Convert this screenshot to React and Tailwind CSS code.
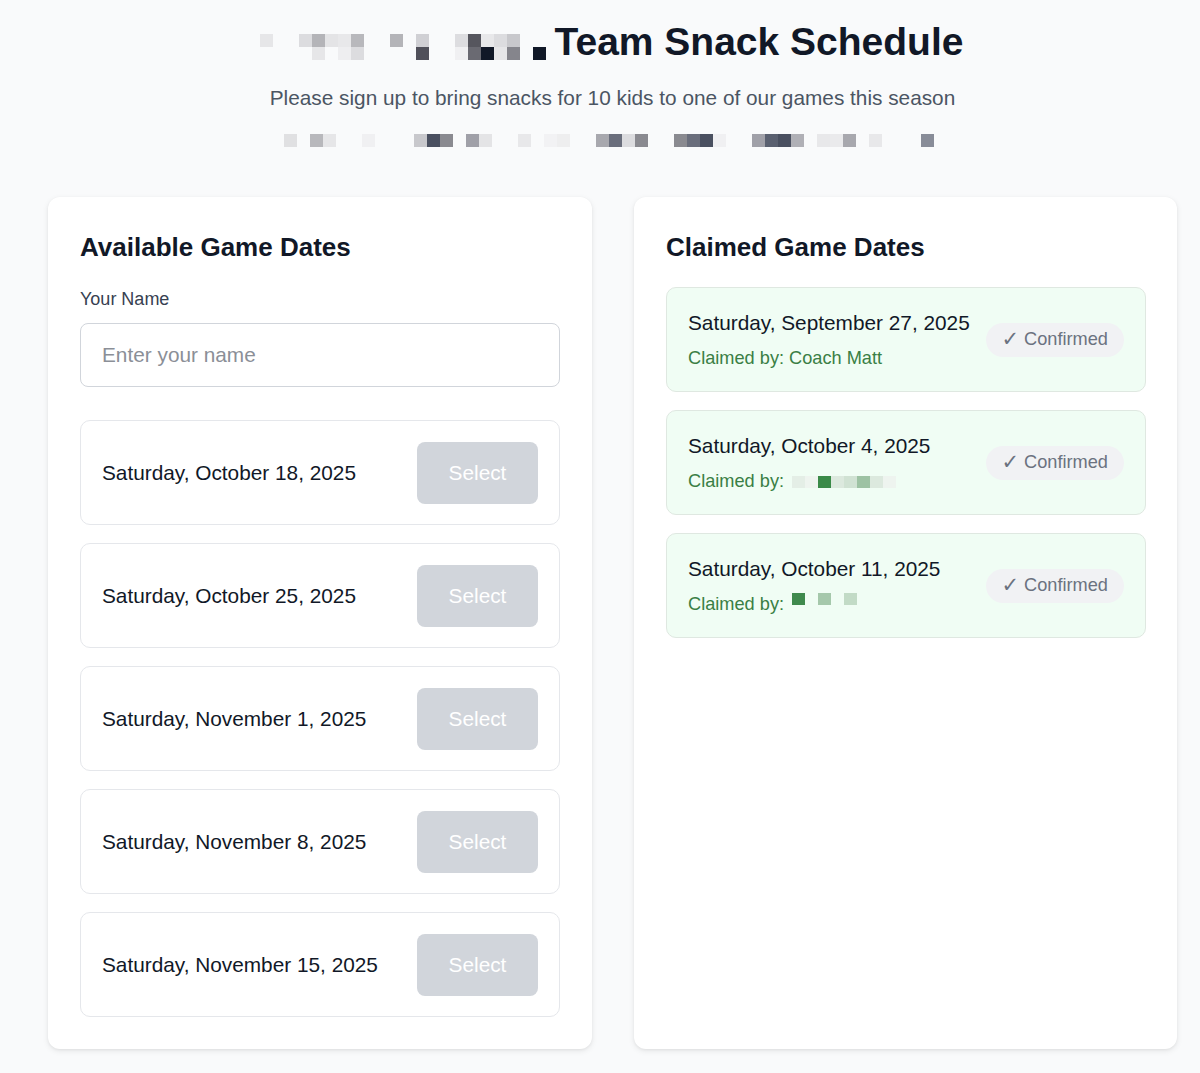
import React, { useState } from "react";

const font = { fontFamily: '"Liberation Sans", Arial, sans-serif' };

// redacted text rendered as mosaic cells
const titleRows = [
  ["#e6e6e8", null, null, "#dcdcdf", "#b4b4b8", "#e4e4e6", "#e8e8ea", "#b8b8bc", null, null, "#b4b4b8", null, "#d0d0d4", null, null, "#dddde0", "#56565e", "#e8e8ea", "#dcdcdf", "#c8c8cc", null, null],
  [null, null, null, null, "#e6e6e8", null, "#eeeef0", "#dcdcdf", null, null, null, null, "#50505a", null, null, "#f0f0f2", "#6a6a72", "#111827", "#e6e6e8", "#85858c", null, "#111827"],
];

const subRow = (() => {
  const row = Array(50).fill(null);
  const set = {
    0: "#e0e0e2", 2: "#b8b8bc", 3: "#e6e6e8", 6: "#f0f0f2", 10: "#c8c8cc", 11: "#4a5060", 12: "#8a8a90",
    14: "#a0a0a8", 15: "#e4e4e6", 18: "#e8e8ea", 20: "#f2f2f4", 21: "#eeeeef", 24: "#a8a8ae", 25: "#6a6e7c",
    26: "#dcdcdf", 27: "#8a8a90", 30: "#8a8a90", 31: "#6a6e7c", 32: "#4a5060", 33: "#f0f0f2", 36: "#a0a0a8",
    37: "#5a6070", 38: "#4a5060", 39: "#b0b0b6", 41: "#e8e8ea", 42: "#eaeaec", 43: "#a8a8ae", 45: "#e8e8ea", 49: "#888c98",
  };
  Object.entries(set).forEach(([k, v]) => (row[k] = v));
  return row;
})();

const Mosaic = ({ rows, cell = 13, h, className = "" }) => (
  <div className={"inline-flex flex-col " + className}>
    {rows.map((r, i) => (
      <div key={i} className="flex">
        {r.map((c, j) => (
          <span
            key={j}
            className="block shrink-0"
            style={{ width: cell, height: h || cell, background: c || "transparent" }}
          />
        ))}
      </div>
    ))}
  </div>
);

const available = [
  "Saturday, October 18, 2025",
  "Saturday, October 25, 2025",
  "Saturday, November 1, 2025",
  "Saturday, November 8, 2025",
  "Saturday, November 15, 2025",
];

const claimed = [
  { date: "Saturday, September 27, 2025", name: "Coach Matt" },
  {
    date: "Saturday, October 4, 2025",
    mosaic: [["#e4eee6", "#eef4ef", "#3a8a48", "#dce9de", "#d0e2d3", "#9dc2a3", "#dce9de", "#eef4ef"]],
    offset: "mt-[2px]",
  },
  {
    date: "Saturday, October 11, 2025",
    mosaic: [["#3f8a4d", null, "#a5c8ab", null, "#c2dbc6"]],
    offset: "-mt-[10px]",
  },
];

export default function App() {
  const [name, setName] = useState("");

  return (
    <div className="min-h-screen bg-[#f9fafb] pb-[24px]" style={font}>
      <div className="ml-[48px] w-[1129px]">
        <header className="pt-[18px] flex flex-col items-center">
          <h1 className="flex items-end h-[48px] text-[39px] leading-[48px] font-bold text-[#111827]">
            <Mosaic rows={titleRows} className="mb-[6px] mr-[9px] -ml-[2px]" />
            Team Snack Schedule
          </h1>
          <p className="mt-[17px] text-[20.8px] leading-[30px] text-[#4b5563]">
            Please sign up to bring snacks for 10 kids to one of our games this season
          </p>
          <Mosaic rows={[subRow]} className="mt-[21px] -ml-[8px]" />
        </header>

        <div className="mt-[50px] grid grid-cols-[544px_543px] gap-[42px]">
          {/* available dates */}
          <section className="bg-white rounded-[12px] shadow-[0_2px_6px_rgba(0,0,0,0.08),0_1px_3px_rgba(0,0,0,0.05)] px-[32px] pt-[33px] pb-[32px]">
            <h2 className="text-[26px] leading-[34px] font-bold text-[#111827]">Available Game Dates</h2>
            <label className="block mt-[22px] text-[18px] leading-[26px] text-[#374151]">Your Name</label>
            <input
              value={name}
              onChange={(e) => setName(e.target.value)}
              placeholder="Enter your name"
              className="mt-[11px] w-full h-[64px] px-[21px] rounded-[8px] border-[1.5px] border-[#d1d5db] bg-white text-[20.8px] text-[#111827] placeholder:text-[#8b8f97] outline-none"
              style={font}
            />
            <div className="mt-[33px] flex flex-col gap-[18px]">
              {available.map((d) => (
                <div
                  key={d}
                  className="h-[105px] flex items-center justify-between pl-[21px] pr-[21px] rounded-[10px] border-[1.5px] border-[#e5e7eb]"
                >
                  <span className="text-[20.8px] text-[#111827]">{d}</span>
                  <button
                    disabled
                    className="w-[121px] h-[62px] rounded-[8px] bg-[#d1d5db] text-white text-[20.8px]"
                    style={font}
                  >
                    Select
                  </button>
                </div>
              ))}
            </div>
          </section>

          {/* claimed dates */}
          <section className="bg-white rounded-[12px] shadow-[0_2px_6px_rgba(0,0,0,0.08),0_1px_3px_rgba(0,0,0,0.05)] pl-[32px] pr-[31px] pt-[33px] pb-[32px]">
            <h2 className="text-[26px] leading-[34px] font-bold text-[#111827]">Claimed Game Dates</h2>
            <div className="mt-[23px] flex flex-col gap-[18px]">
              {claimed.map((c) => (
                <div
                  key={c.date}
                  className="h-[105px] flex items-center justify-between pl-[21px] pr-[21px] rounded-[10px] border-[1.5px] border-[#dfe8e1] bg-[#f0fdf4]"
                >
                  <div className="flex flex-col">
                    <span className="text-[20.8px] leading-[28px] text-[#111827]">{c.date}</span>
                    <span className="mt-[8px] flex items-center text-[18.2px] leading-[26px] text-[#3a7f45]">
                      Claimed by:
                      {c.name ? (
                        <span className="ml-[5px]">{c.name}</span>
                      ) : (
                        <Mosaic rows={c.mosaic} h={12} className={"ml-[8px] " + c.offset} />
                      )}
                    </span>
                  </div>
                  <span className="h-[34px] pl-[15px] pr-[16px] flex items-center rounded-full bg-[#f1f2f4] text-[18.2px] text-[#6b7280]">
                    <span className="mr-[5px] text-[21px] leading-none" style={{ fontFamily: '"DejaVu Sans", sans-serif' }}>✓</span>
                    Confirmed
                  </span>
                </div>
              ))}
            </div>
          </section>
        </div>
      </div>
    </div>
  );
}
